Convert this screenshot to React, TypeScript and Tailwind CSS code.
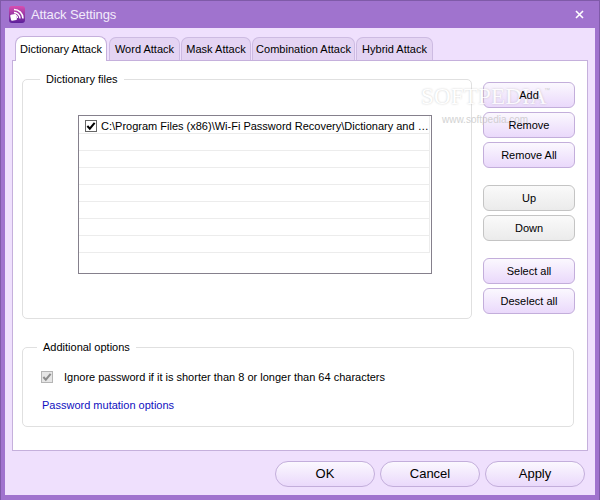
const font = "font-['Liberation_Sans',sans-serif]";

const tabs = [
  { label: "Word Attack", width: "w-[71px]" },
  { label: "Mask Attack", width: "w-[70px]" },
  { label: "Combination Attack", width: "w-[103px]" },
  { label: "Hybrid Attack", width: "w-[77px]" },
];

function AppIcon() {
  return (
    <svg width="16" height="17" viewBox="0 0 16 17" className="shrink-0">
      <defs>
        <linearGradient id="ic" x1="0" y1="0" x2="0" y2="1">
          <stop offset="0" stopColor="#d94fb0" />
          <stop offset="1" stopColor="#5b1f9a" />
        </linearGradient>
      </defs>
      <rect x="0" y="0" width="16" height="17" rx="3" fill="url(#ic)" />
      <path d="M5 3.5a9 9 0 0 1 9 9" stroke="#fff" strokeWidth="1.5" fill="none" />
      <path d="M5 6.5a6 6 0 0 1 6 6" stroke="#fff" strokeWidth="1.4" fill="none" />
      <path d="M6 9a3 3 0 0 1 2.5 3" stroke="#fff" strokeWidth="1.2" fill="none" />
      <rect x="1.5" y="8.5" width="6" height="6" rx="1" fill="#fff" transform="rotate(-12 4 11)" />
    </svg>
  );
}

function Check({ color }: { color: string }) {
  return (
    <svg width="10" height="10" viewBox="0 0 11 11">
      <path d="M1.5 5.5 4.2 8.5 9.5 2" stroke={color} strokeWidth="2.2" fill="none" />
    </svg>
  );
}

function SideButton({ label, gray }: { label: string; gray?: boolean }) {
  return (
    <button
      className={
        gray
          ? "w-[92px] h-[26px] pt-px rounded-[6px] border border-[#c4c4c4] bg-gradient-to-b from-[#fafafa] to-[#ebebeb] text-[11px] text-black"
          : "w-[92px] h-[26px] pt-px rounded-[6px] border border-[#c3aedb] bg-gradient-to-b from-[#fbf8fe] to-[#ead9fb] text-[11px] text-black"
      }
    >
      <span className="relative z-20">{label}</span>
    </button>
  );
}

function FooterButton({ label }: { label: string }) {
  return (
    <button className="w-[100px] h-[26px] rounded-full border border-[#c3aedb] bg-gradient-to-b from-[#fbf8fe] to-[#ead9fb] text-[13px] text-black">
      {label}
    </button>
  );
}

export default function App() {
  return (
    <div className={`${font} relative w-[600px] h-[500px] flex flex-col bg-[#a073ce] border border-[#7f5aa8] border-b-0 overflow-hidden`}>
      {/* title bar */}
      <div className="h-[27px] shrink-0 flex items-center pl-2 pr-[15px] gap-1.5">
        <AppIcon />
        <span className="text-[13px] tracking-[-0.1px] text-[#f3ebfb]">Attack Settings</span>
        <svg width="9" height="9" viewBox="0 0 9 9" className="ml-auto">
          <path d="M1 1l7 7M8 1 1 8" stroke="#fff" strokeWidth="1.6" />
        </svg>
      </div>

      {/* dialog body */}
      <div className="mx-1 mb-1 h-[467px] bg-[#efe0fd] flex flex-col px-[7px] pt-[7px]">
        {/* tab strip */}
        <div className="flex items-end h-[25px] pl-[3px] gap-px relative z-10 text-[11px] text-black whitespace-nowrap">
          <div className="w-[92px] h-[25px] -mb-px bg-white border border-b-0 border-[#c5b0dc] rounded-t-[8px] flex items-center justify-center mr-px">
            Dictionary Attack
          </div>
          {tabs.map((t) => (
            <div
              key={t.label}
              className={`${t.width} h-[23px] bg-[#e4d4f3] border border-b-0 border-[#cdbbe2] rounded-t-[7px] flex items-center justify-center`}
            >
              {t.label}
            </div>
          ))}
        </div>

        {/* panel */}
        <div className="w-[576px] h-[391px] bg-white border border-[#c5b0dc] px-[9px] pt-[18px] flex flex-col">
          <div className="flex items-start">
            {/* dictionary files group */}
            <div className="relative w-[450px] h-[240px] border border-[#e0e0e0] rounded-[5px] pl-[55px] pt-[35px]">
              <span className="absolute left-[17px] -top-[9px] bg-white px-[6px] text-[11px] leading-[17px] text-black">
                Dictionary files
              </span>
              <div className="w-[354px] h-[159px] border border-[#85808c] bg-white pr-px">
                <div className="h-[18px] flex items-center pl-[6px] pt-[3px] gap-[4px] border-r border-b border-[#ececec]">
                  <span className="w-[12px] h-[12px] border border-[#666] flex items-center justify-center bg-white shrink-0">
                    <Check color="#000" />
                  </span>
                  <span className="text-[11px] text-black whitespace-nowrap">
                    C:\Program Files (x86)\Wi-Fi Password Recovery\Dictionary and …
                  </span>
                </div>
                {Array.from({ length: 7 }).map((_, i) => (
                  <div key={i} className="h-[17px] border-b border-r border-[#ececec]" />
                ))}
              </div>
            </div>

            {/* side buttons */}
            <div className="ml-[11px] mt-[3px] flex flex-col gap-1">
              <SideButton label="Add" />
              <SideButton label="Remove" />
              <SideButton label="Remove All" />
              <div className="h-[9px]" />
              <SideButton label="Up" gray />
              <SideButton label="Down" gray />
              <div className="h-[9px]" />
              <SideButton label="Select all" />
              <SideButton label="Deselect all" />
            </div>
          </div>

          {/* additional options group */}
          <div className="relative w-[552px] h-[80px] mt-[28px] border border-[#e0e0e0] rounded-[5px] pl-[18px] pt-[21px]">
            <span className="absolute left-[14px] -top-[9px] bg-white px-[6px] text-[11px] leading-[17px] text-black">
              Additional options
            </span>
            <div className="flex items-center gap-[11px] h-[16px]">
              <span className="w-[12px] h-[12px] border border-[#b5b5b5] bg-[#e6e6e6] flex items-center justify-center shrink-0">
                <Check color="#8c8c8c" />
              </span>
              <span className="text-[11px] text-black whitespace-nowrap">
                Ignore password if it is shorter than 8 or longer than 64 characters
              </span>
            </div>
            <a className="block ml-px mt-[12px] text-[11px] leading-[17px] text-[#1010c0]">
              Password mutation options
            </a>
          </div>
        </div>

        {/* footer */}
        <div className="flex justify-end gap-[5px] mt-[10px] pr-[3px]">
          <FooterButton label="OK" />
          <FooterButton label="Cancel" />
          <FooterButton label="Apply" />
        </div>
      </div>

      {/* watermark */}
      <span className="absolute z-10 left-[420px] top-[83px] font-['Liberation_Serif',serif] text-[23px] leading-[26px] tracking-[0.2px] text-white opacity-80 [text-shadow:0_0_2px_#bbb]">
        SOFTPEDIA
      </span>
      <span className="absolute z-10 left-[543px] top-[85px] text-[6px] leading-[8px] text-[#d0d0d0]">
        ™
      </span>
      <span className="absolute z-10 left-[441px] top-[112px] text-[10px] leading-[14px] text-[#c8c8c8] opacity-80">
        www.softpedia.com
      </span>
    </div>
  );
}
